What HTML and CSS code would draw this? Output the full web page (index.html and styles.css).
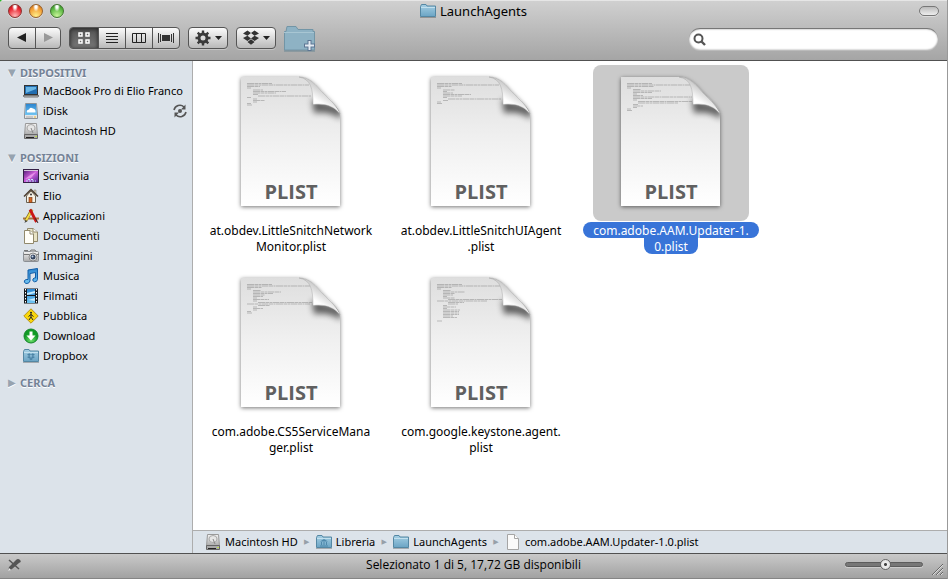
FILE: index.html
```html
<!DOCTYPE html>
<html lang="it">
<head>
<meta charset="utf-8">
<meta name="viewport" content="width=device-width, initial-scale=1">
<title>LaunchAgents</title>
<link rel="stylesheet" href="styles.css">
</head>
<body>
<svg class="defs" aria-hidden="true">
  <defs>
    <linearGradient id="folder-fill" x2="0" y2="1"><stop stop-color="#a5cfe4"/><stop offset="1" stop-color="#6ba4c4"/></linearGradient>
    <linearGradient id="paper" x2="0" y2="1"><stop stop-color="#dedede"/><stop offset=".45" stop-color="#efefef"/><stop offset="1" stop-color="#fff"/></linearGradient>
    <linearGradient id="curl" x1=".3" y1="1" x2=".75" y2=".4"><stop stop-color="#fff"/><stop offset=".5" stop-color="#fff"/><stop offset="1" stop-color="#c4c4c4"/></linearGradient>
    <linearGradient id="metal" x2="0" y2="1"><stop stop-color="#f4f4f4"/><stop offset="1" stop-color="#a9a9a9"/></linearGradient>
    <linearGradient id="sky" x2="0" y2="1"><stop stop-color="#2c86d0"/><stop offset="1" stop-color="#6fc4f2"/></linearGradient>
    <linearGradient id="aurora" x2="1" y2="1"><stop stop-color="#4a1a70"/><stop offset=".5" stop-color="#d060dc"/><stop offset="1" stop-color="#4b2590"/></linearGradient>
    <radialGradient id="green" cy=".8"><stop stop-color="#6fe06c"/><stop offset="1" stop-color="#109a25"/></radialGradient>
    <filter id="shadow" x="-20%" y="-20%" width="140%" height="140%"><feDropShadow dx="0" dy="1" stdDeviation="2" flood-opacity=".55"/></filter>
    <filter id="soft" x="-50%" y="-50%" width="200%" height="200%"><feGaussianBlur stdDeviation="3"/></filter>
    <clipPath id="page-clip"><path d="M28 12H86C97 12 104 21 110 28C118 36 127 43 127 50V141H28Z"/></clipPath>

    <symbol id="folder" viewBox="0 0 16 16"><path d="M.5 13.500V3.500L1.500 1.500H6L7 3H15.500V13.500Z" fill="url(#folder-fill)" stroke="#5487a3"/><path d="M1 4.500H15" stroke="#c2e0ee"/><path d="M0 14.500H16" stroke="#000" stroke-opacity=".25"/></symbol>
    <symbol id="library" viewBox="0 0 16 16"><use href="#folder"/><path d="M4 7.500L8 5L12 7.500Z" fill="#4f88ab"/><path d="M5.500 8v3M8 8v3M10.500 8v3M4 12h8" stroke="#4f88ab"/></symbol>
    <symbol id="boxmark" viewBox="0 0 18 17"><path d="M5 0L9 3L5 6L0 3.500ZM13 0L9 3L13 6L18 3.500ZM0 8.500L5 6L9 9L5 12ZM18 8.500L13 6L9 9L13 12ZM5 13L9 10L13 13L9 16Z"/></symbol>
    <symbol id="disk" viewBox="0 0 16 16"><path d="M2.500.5H13.500L14.500 12H1.500Z" fill="url(#metal)" stroke="#999"/><ellipse cx="8" cy="5" rx="4" ry="3.500" fill="#e6e6e6" stroke="#aaa"/><path d="M8 5l2 5" stroke="#888"/><path d="M1.500 11.500H14.500V15.500H1.500Z" fill="#aaa" stroke="#666"/><path d="M3 14.500H11" stroke="#222"/><path d="M12 13.500h2" stroke="#bada4a"/></symbol>
    <symbol id="laptop" viewBox="0 0 16 16"><rect x="1.500" y="2.500" width="13" height="9" fill="#226db0" stroke="#333"/><path d="M3 4H13V6L3 10Z" fill="#69b6e5"/><path d="M0 12.500H16L15 14H1Z" fill="#bbb" stroke="#777"/></symbol>
    <symbol id="idisk" viewBox="0 0 16 16"><path d="M2.500.5H13.500L14.500 12V15.500H1.500V12Z" fill="#e5e5e5" stroke="#8b9299"/><path d="M3 1H13L14 12H2Z" fill="url(#sky)"/><path d="M4 9.500Q3 7 6 6.500Q7 3.500 10 5.500Q13 6 12.500 9.500Z" fill="#fff"/><path d="M3 14h7" stroke="#aaa"/><path d="M11 14h2" stroke="#e6b737"/></symbol>
    <symbol id="desktop" viewBox="0 0 16 16"><rect x=".5" y="1.500" width="15" height="13" fill="url(#aurora)" stroke="#352047"/><path d="M1 2.500H15" stroke="#d7cadc"/><path d="M2 11Q6 7 13 4L8 10Z" fill="#f0a6ef" opacity=".7"/><path d="M3 13h10M5 11.500h6" stroke="#bfe5f9" stroke-dasharray="2 1"/></symbol>
    <symbol id="home" viewBox="0 0 16 16"><path d="M3.500 8L8 3L12.500 8V14.500H3.500Z" fill="#f8f3e6" stroke="#6a6251"/><path d="M11 2h2v4l-2-2Z" fill="#dcd1b8" stroke="#777" stroke-width=".5"/><path d="M1 8.500L8 1.500L15 8.500" fill="none" stroke="#4b3d2e" stroke-width="1.500"/><rect x="6" y="9.500" width="3" height="5" fill="#d76922" stroke="#6a3015" stroke-width=".6"/><circle cx="8" cy="6.500" r="1" fill="#333"/></symbol>
    <symbol id="apps" viewBox="0 0 16 16"><path d="M0 10.500H16" stroke="#a77443" stroke-width="2"/><path d="M9 1.500L2.500 13" stroke="#7a621c" stroke-width="3"/><path d="M9 2L3 12.500" stroke="#f6dc43" stroke-width="2"/><path d="M7 1.500L13.500 14" stroke="#ca1716" stroke-width="2.800"/><path d="M12 10l3 5" stroke="#333"/><path d="M1.500 15l1-3 2 1Z" fill="#444"/></symbol>
    <symbol id="docs" viewBox="0 0 16 16"><path d="M4.500.5H10L14.500 4V13.500H4.500Z" fill="#e8e3c5" stroke="#91896c"/><path d="M10 .5V4H14.500" fill="#fff" stroke="#91896c"/><path d="M1.500 2.500H7L10.500 6V15.500H1.500Z" fill="#fffef8" stroke="#91896c"/><path d="M7 2.500V6H10.500" fill="#fff" stroke="#91896c"/></symbol>
    <symbol id="camera" viewBox="0 0 16 16"><rect x=".5" y="3.500" width="15" height="10" rx="1" fill="url(#metal)" stroke="#8b8f94"/><path d="M1 2.500h4M7 3.500l1-1.500h4l1 1.500" stroke="#777" fill="#ccc"/><path d="M1 6.500h15" stroke="#777"/><circle cx="10" cy="9" r="4" fill="#e5e5e5" stroke="#888"/><circle cx="10" cy="9" r="2.500" fill="#34445f"/><circle cx="9.500" cy="8.500" r="1" fill="#c6d7f0"/></symbol>
    <symbol id="music" viewBox="0 0 16 16"><path d="M5 2L14.500.5V11.500Q14 14 11.500 13.800Q9 13 10 11Q11 9.500 12.500 10V4.500L7 5.500V13Q6 16 3 15.500Q.5 14.500 1.500 12.500Q3 11 5 11.500Z" fill="url(#sky)" stroke="#125da7"/></symbol>
    <symbol id="film" viewBox="0 0 16 16"><path d="M1 .5H15V15.500H1Z" fill="#16191c"/><path d="M4 1h8v6H4ZM4 8h8v7H4Z" fill="url(#sky)"/><path d="M4 5l8-2v2L4 7ZM5 12l7-2v3Z" fill="#c5eafc"/><path d="M2.500 1V15M13.500 1V15" stroke="#fff" stroke-dasharray="1.500 1.500"/></symbol>
    <symbol id="public" viewBox="0 0 16 16"><path d="M8 .8L15.200 8L8 15.200L.8 8Z" fill="#f9d60c" stroke="#b99516"/><circle cx="8" cy="4.700" r="1" fill="#222"/><path d="M8 6v3l2 3M8 9l-2 3M5.500 8.500L8 6.500L10.500 8.500" fill="none" stroke="#222"/></symbol>
    <symbol id="download" viewBox="0 0 16 16"><circle cx="8" cy="8" r="7" fill="url(#green)" stroke="#16862a"/><path d="M6.500 3.500H9.500V7.500H12.500L8 12.500L3.500 7.500H6.500Z" fill="#fff"/></symbol>
    <symbol id="page-small" viewBox="0 0 16 16"><path d="M2.500.5H9.500L13.500 4.500V15.500H2.500Z" fill="#fafafa" stroke="#a5a5a5"/><path d="M9.500.5V4.500H13.500" fill="#fff" stroke="#a5a5a5"/></symbol>

    <symbol id="page" viewBox="0 0 156 156">
      <path d="M28 12H86C97 12 104 21 110 28C118 36 127 43 127 50V141H28Z" fill="url(#paper)" filter="url(#shadow)"/>
      <g clip-path="url(#page-clip)"><path d="M99 34L128 42V54C118 47 108 47 101 48Z" opacity=".6" filter="url(#soft)"/></g>
    </symbol>
    <symbol id="fold" viewBox="0 0 156 156">
      <path d="M86 12C98 14 100 24 100 39.500C112 38 121 41 127 49C125 42 118 36 110 28C103 20 97 12 86 12Z" fill="url(#curl)" stroke="#999" stroke-width=".4"/>
      <text x="78" y="134" text-anchor="middle" class="kind">PLIST</text>
    </symbol>
  </defs>
</svg>

<div class="window">
  <header class="header">
    <div class="titlebar">
      <div class="lights">
        <button class="light red" aria-label="Chiudi"></button>
        <button class="light amber" aria-label="Riduci"></button>
        <button class="light green" aria-label="Ingrandisci"></button>
      </div>
      <h1 class="title"><svg class="icon"><use href="#folder"/></svg>LaunchAgents</h1>
      <button class="pill" aria-label="Barra strumenti"></button>
    </div>
    <div class="toolbar">
      <div class="group history">
        <button aria-label="Indietro"><svg width="10" height="10"><path d="M9 0V9L0 4.500Z" fill="#222"/></svg></button>
        <button aria-label="Avanti"><svg width="10" height="10"><path d="M1 0V9L10 4.500Z" fill="#999"/></svg></button>
      </div>
      <div class="group views">
        <button class="active" aria-label="Icone"><svg width="12" height="12"><path d="M1 1h3v3h-3ZM8 1h3v3h-3ZM1 8h3v3h-3ZM8 8h3v3h-3Z" fill="none" stroke="#fff" stroke-width="1.500"/></svg></button>
        <button aria-label="Elenco"><svg width="12" height="12"><path d="M0 1.500h12M0 4.500h12M0 7.500h12M0 10.500h12" stroke="#222"/></svg></button>
        <button aria-label="Colonne"><svg width="14" height="12"><path d="M.5 1.500h13v9H.5ZM4.500 1v10M9.500 1v10" fill="none" stroke="#222"/></svg></button>
        <button aria-label="Cover Flow"><svg width="16" height="12"><path d="M4 3h8v6H4Z" fill="#333"/><path d="M.5 1v10M2.500 2v8M13.500 2v8M15.500 1v10" stroke="#333"/></svg></button>
      </div>
      <div class="group menu">
        <button aria-label="Azioni"><svg width="16" height="16" viewBox="0 0 16 16"><circle cx="8" cy="8" r="4" fill="none" stroke="#3a3a3a" stroke-width="3"/><path d="M8 .5v4M8 11.500v4M.5 8h4M11.500 8h4M2.700 2.700l2.500 2.500M10.800 10.800l2.500 2.500M13.300 2.700l-2.500 2.500M5.200 10.800l-2.500 2.500" stroke="#3a3a3a" stroke-width="2.400"/></svg><svg width="7" height="4"><path d="M0 0H7L3.500 4Z" fill="#222"/></svg></button>
      </div>
      <div class="group menu">
        <button aria-label="Dropbox"><svg width="16" height="16" fill="#333"><use href="#boxmark"/></svg><svg width="7" height="4"><path d="M0 0H7L3.500 4Z" fill="#222"/></svg></button>
      </div>
      <button class="newfolder" aria-label="Nuova cartella"><svg width="34" height="28" viewBox="0 0 34 28"><path d="M.5 26V7.500H2L3 2.500H12L14 5.500H29V7.500H30.500V26Z" fill="#8eb2c4" stroke="#7295a6"/><path d="M0 8.500H30" stroke="#a8c6d3"/><path d="M0 27H31" stroke="#6d8794"/><path d="M25.500 16v11M20 21.500h11" stroke="#5c7593" stroke-width="4"/><path d="M25.500 17v9M21 21.500h9" stroke="#e3eaf2" stroke-width="2"/></svg></button>
      <label class="search"><svg width="14" height="14" viewBox="0 0 14 14"><circle cx="5.500" cy="5.500" r="4" fill="none" stroke="#555" stroke-width="2"/><path d="M8.500 8.500l3.500 3.500" stroke="#555" stroke-width="2.400"/></svg><input type="search" aria-label="Cerca"></label>
    </div>
  </header>

  <div class="body">
    <nav class="sidebar">
      <section>
        <h2><span class="tri">▼</span>DISPOSITIVI</h2>
        <a href="#"><svg class="icon"><use href="#laptop"/></svg>MacBook Pro di Elio Franco</a>
        <a href="#"><svg class="icon"><use href="#idisk"/></svg>iDisk<svg class="sync" width="14" height="14" viewBox="0 0 14 14"><path d="M1 6A6 6 0 0 1 11 3M13 8A6 6 0 0 1 3 11" fill="none" stroke="#555" stroke-width="1.600"/><path d="M12.500.5V5.500H8ZM1.500 13.500V8.500H6Z" fill="#555"/><circle cx="7" cy="7" r="2" fill="#555"/></svg></a>
        <a href="#"><svg class="icon"><use href="#disk"/></svg>Macintosh HD</a>
      </section>
      <section>
        <h2><span class="tri">▼</span>POSIZIONI</h2>
        <a href="#"><svg class="icon"><use href="#desktop"/></svg>Scrivania</a>
        <a href="#"><svg class="icon"><use href="#home"/></svg>Elio</a>
        <a href="#"><svg class="icon"><use href="#apps"/></svg>Applicazioni</a>
        <a href="#"><svg class="icon"><use href="#docs"/></svg>Documenti</a>
        <a href="#"><svg class="icon"><use href="#camera"/></svg>Immagini</a>
        <a href="#"><svg class="icon"><use href="#music"/></svg>Musica</a>
        <a href="#"><svg class="icon"><use href="#film"/></svg>Filmati</a>
        <a href="#"><svg class="icon"><use href="#public"/></svg>Pubblica</a>
        <a href="#"><svg class="icon"><use href="#download"/></svg>Download</a>
        <a href="#"><svg class="icon" viewBox="0 0 16 16"><use href="#folder"/><use href="#boxmark" x="4" y="5" width="8" height="8" fill="#4b83a5"/></svg>Dropbox</a>
      </section>
      <section>
        <h2><span class="tri">▶</span>CERCA</h2>
      </section>
    </nav>

    <main class="content">
      <div class="files">
        <a href="#" class="file"><svg class="preview" viewBox="0 0 156 156"><use href="#page"/><path class="code" d="M34 18.500h25M34 20h62M34 21.500h13M34 23h4M40 25h10M40 26.500h33M40 28h23M40 29.500h5M45 31h53M34 32.500h4M40 34h4M40 35.500h12M40 37h4M34 38.500h4M34 40h5"/><use href="#fold"/></svg><span class="name"><span>at.obdev.LittleSnitchNetwork</span><span>Monitor.plist</span></span></a>
        <a href="#" class="file"><svg class="preview" viewBox="0 0 156 156"><use href="#page"/><path class="code" d="M34 18.500h25M34 20h62M34 21.500h15M34 23h4M40 25h12M40 26.500h4M40 28h10M40 29.500h28M40 31h19M40 32.500h4M45 34h53M40 35.500h5M34 37h4M34 38.500h5"/><use href="#fold"/></svg><span class="name"><span>at.obdev.LittleSnitchUIAgent</span><span>.plist</span></span></a>
        <a href="#" class="file selected"><svg class="preview" viewBox="0 0 156 156"><use href="#page"/><path class="code" d="M34 18.500h25M34 20h63M34 21.500h27M34 23h4M40 24.500h8M40 26h28M40 27.500h19M40 29h4M40 30.500h10M40 32h59M40 33.500h19M40 35h4M45 36.500h54M45 38h40M40 39.500h5M40 41h10M40 42.500h4M34 44h4M34 45.500h5"/><use href="#fold"/></svg><span class="name"><span>com.adobe.AAM.Updater-1.</span><span>0.plist</span></span></a>
        <a href="#" class="file"><svg class="preview" viewBox="0 0 156 156"><use href="#page"/><path class="code" d="M34 18.500h25M34 20h63M34 21.500h15M34 23h4M40 24.500h8M40 26h28M40 27.500h20M40 29h12M40 30.500h10M40 32h4M40 33.500h16M40 35h4M45 36.500h54M34 38h63M45 39.500h12M40 41h4M40 42.500h10M40 44h4M34 45.500h4M34 47h5"/><use href="#fold"/></svg><span class="name"><span>com.adobe.CS5ServiceMana</span><span>ger.plist</span></span></a>
        <a href="#" class="file"><svg class="preview" viewBox="0 0 156 156"><use href="#page"/><path class="code" d="M34 18.500h25M34 20h63M34 21.500h15M34 23h4M40 24.500h8M40 26h22M40 27.500h12M40 29h10M40 30.500h4M40 32h12M45 33.500h54M34 35h50M45 36.500h16M45 38h10M40 39.500h4M40 41h13M40 42.500h4M40 44h17M40 45.500h16M40 47h16M40 48.500h16M40 50h10M40 51.500h14M34 55h5"/><use href="#fold"/></svg><span class="name"><span>com.google.keystone.agent.</span><span>plist</span></span></a>
      </div>
      <nav class="pathbar">
        <a href="#"><svg class="icon"><use href="#disk"/></svg>Macintosh HD</a><span class="sep">▶</span>
        <a href="#"><svg class="icon"><use href="#library"/></svg>Libreria</a><span class="sep">▶</span>
        <a href="#"><svg class="icon"><use href="#folder"/></svg>LaunchAgents</a><span class="sep">▶</span>
        <a href="#"><svg class="icon"><use href="#page-small"/></svg>com.adobe.AAM.Updater-1.0.plist</a>
      </nav>
    </main>
  </div>

  <footer class="status">
    <svg width="14" height="14" viewBox="0 0 14 14"><path d="M2 2l10 9" stroke="#555" stroke-width="1.500"/><path d="M1 13l1-4L9 2q2-2 4 0t-1 3L5 11Z" fill="#555"/><path d="M1 13l1-3 2 2Z" fill="#eee"/></svg>
    <p>Selezionato 1 di 5, 17,72 GB disponibili</p>
    <input class="size" type="range" value="52" aria-label="Dimensione icone">
    <svg class="grip" width="12" height="12"><path d="M1 12L12 1M5 12L12 5M9 12L12 9" stroke="#666"/><path d="M2 12L12 2M6 12L12 6M10 12L12 10" stroke="#ddd"/></svg>
  </footer>
</div>
</body>
</html>
```
FILE: styles.css
```css
* { box-sizing: border-box; }
body {
  margin: 0;
  background: #27b527;
  color: #000;
  font: 11px/16px "Noto Sans", "Open Sans", sans-serif;
}
button { margin: 0; padding: 0; border: 0; background: none; font: inherit; }
h1, h2, p { margin: 0; font: inherit; }
a { color: inherit; text-decoration: none; }
svg { flex: none; }
.defs { position: absolute; width: 0; height: 0; }
.icon { width: 16px; height: 16px; }

.window {
  display: flex;
  flex-direction: column;
  min-height: 100vh;
  overflow: hidden;
  border-right: 1px solid #999;
  border-top-left-radius: 4px;
  background: #fff;
}

.header {
  border-top: 1px solid #e6e6e6;
  border-bottom: 1px solid #515151;
  background: linear-gradient(#d0d0d0, #a5a5a5);
}
.titlebar {
  display: grid;
  grid-template-columns: 1fr auto 1fr;
  align-items: center;
  height: 21px;
  padding: 0 8px 2px;
}
.lights { display: flex; gap: 7px; }
.light {
  width: 14px;
  height: 14px;
  border: 1px solid #555;
  border-radius: 50%;
  box-shadow: 0 1px 0 #e0e0e0;
}
.red { border-color: #8c3230; background: radial-gradient(ellipse at 50% 12%, #fff 0 12%, transparent 35%), radial-gradient(circle at 50% 90%, #ffb9b9, #e8202b 65%, #9c1016); }
.amber { border-color: #96602c; background: radial-gradient(ellipse at 50% 12%, #fff 0 12%, transparent 35%), radial-gradient(circle at 50% 90%, #fff08a, #f29a30 65%, #a85a10); }
.green { border-color: #41752f; background: radial-gradient(ellipse at 50% 12%, #fff 0 12%, transparent 35%), radial-gradient(circle at 50% 90%, #c9f59a, #56b53f 65%, #2c7420); }
.title { display: flex; align-items: center; gap: 4px; font-size: 13px; }
.pill {
  justify-self: end;
  width: 20px;
  height: 10px;
  border: 1px solid #777;
  border-radius: 5px;
  background: linear-gradient(#bbb, #eee);
  box-shadow: 0 1px 0 #ddd;
}

.toolbar {
  display: flex;
  align-items: center;
  gap: 8px;
  height: 38px;
  padding: 0 9px 6px 8px;
}
.group {
  display: flex;
  height: 22px;
  border: 1px solid #555;
  border-radius: 4px;
  background: linear-gradient(#fbfbfb, #b9b9b9);
  box-shadow: 0 1px 0 #c5c5c5;
  overflow: hidden;
}
.group button {
  display: flex;
  align-items: center;
  justify-content: center;
  gap: 4px;
  width: 26px;
}
.group button + button { border-left: 1px solid #555; }
.history { width: 53px; }
.history button + button { width: 25px; }
.views button { width: 27px; }
.views .active {
  width: 28px;
  background: linear-gradient(#555, #777);
  box-shadow: inset 0 1px 4px #222;
}
.menu button { width: 38px; }
.newfolder { height: 28px; }
.search {
  display: flex;
  align-items: center;
  width: 249px;
  height: 22px;
  margin: 2px 0 0 auto;
  padding: 0 4px;
  border-top: 1px solid #777;
  border-radius: 11px;
  background: #fff;
  box-shadow: inset 0 0 2px #888, 0 1px 0 #bbb;
}
.search input {
  flex: 1;
  min-width: 0;
  border: 0;
  outline: 0;
  background: none;
  font: inherit;
}

.body { display: flex; flex: 1; }
.sidebar {
  flex: none;
  width: 193px;
  padding-top: 4px;
  border-right: 1px solid #adadad;
  background: #dce3ea;
}
.sidebar section { margin-bottom: 9px; }
.sidebar h2 {
  display: flex;
  align-items: center;
  gap: 3px;
  padding-left: 8px;
  color: #748296;
  font-weight: 700;
  text-shadow: 0 1px 0 #fff;
}
.tri { width: 9px; color: #97a3af; font: 10px/16px "DejaVu Sans", sans-serif; }
.sidebar a {
  display: flex;
  align-items: center;
  gap: 4px;
  height: 20px;
  padding: 0 5px 0 23px;
  white-space: nowrap;
}
.sync { margin-left: auto; }

.content { display: flex; flex: 1; flex-direction: column; min-width: 0; }
.files {
  display: grid;
  flex: 1;
  grid-template-columns: repeat(auto-fill, 190px);
  align-content: start;
  row-gap: 12px;
  padding: 4px 3px 0;
}
.file { display: flex; flex-direction: column; align-items: center; }
.preview { width: 156px; height: 156px; border-radius: 8px; }
.code { fill: none; stroke: #777; stroke-width: .7; stroke-dasharray: 7 .5 4 .5 2 .5; opacity: .6; }
.kind { fill: #606060; font: 700 20px "Open Sans", sans-serif; }
.name { display: flex; flex-direction: column; align-items: center; padding-top: 1px; font-size: 12px; }
.name span { height: 16px; padding: 1px 10px 0; white-space: nowrap; }
.selected .preview { background: #cacaca; }
.selected .name span { border-radius: 8px; background: #3874d8; color: #fff; }
.selected .name span:last-child { border-radius: 0 0 8px 8px; }

.pathbar {
  display: flex;
  align-items: center;
  height: 23px;
  padding-left: 12px;
  border-top: 1px solid #adadad;
  background: #dce3ea;
  white-space: nowrap;
}
.pathbar a { display: flex; align-items: center; gap: 4px; }
.sep { width: 18px; color: #97a0a8; font: 7px/16px "DejaVu Sans", sans-serif; text-align: center; }

.status {
  display: flex;
  align-items: center;
  height: 26px;
  padding: 0 4px 3px 7px;
  border-top: 1px solid #515151;
  border-bottom: 1px solid #858585;
  background: linear-gradient(#c9c9c9, #a2a2a2);
}
.status p { flex: 1; padding-left: 81px; font-family: "Open Sans", sans-serif; font-size: 12px; text-align: center; }
.size { width: 78px; height: 14px; margin: 0 8px 0 0; background: none; appearance: none; }
.size::-webkit-slider-runnable-track {
  height: 5px;
  border: 1px solid #5c5c5c;
  border-radius: 3px;
  background: #777;
  box-shadow: 0 1px 0 #ccc;
}
.size::-webkit-slider-thumb {
  width: 11px;
  height: 11px;
  margin-top: -4px;
  border: 1px solid #666;
  border-radius: 50%;
  background: radial-gradient(circle, #444 0 1px, #eee 2px, #ddd);
  appearance: none;
}
.grip { align-self: flex-end; }
```
